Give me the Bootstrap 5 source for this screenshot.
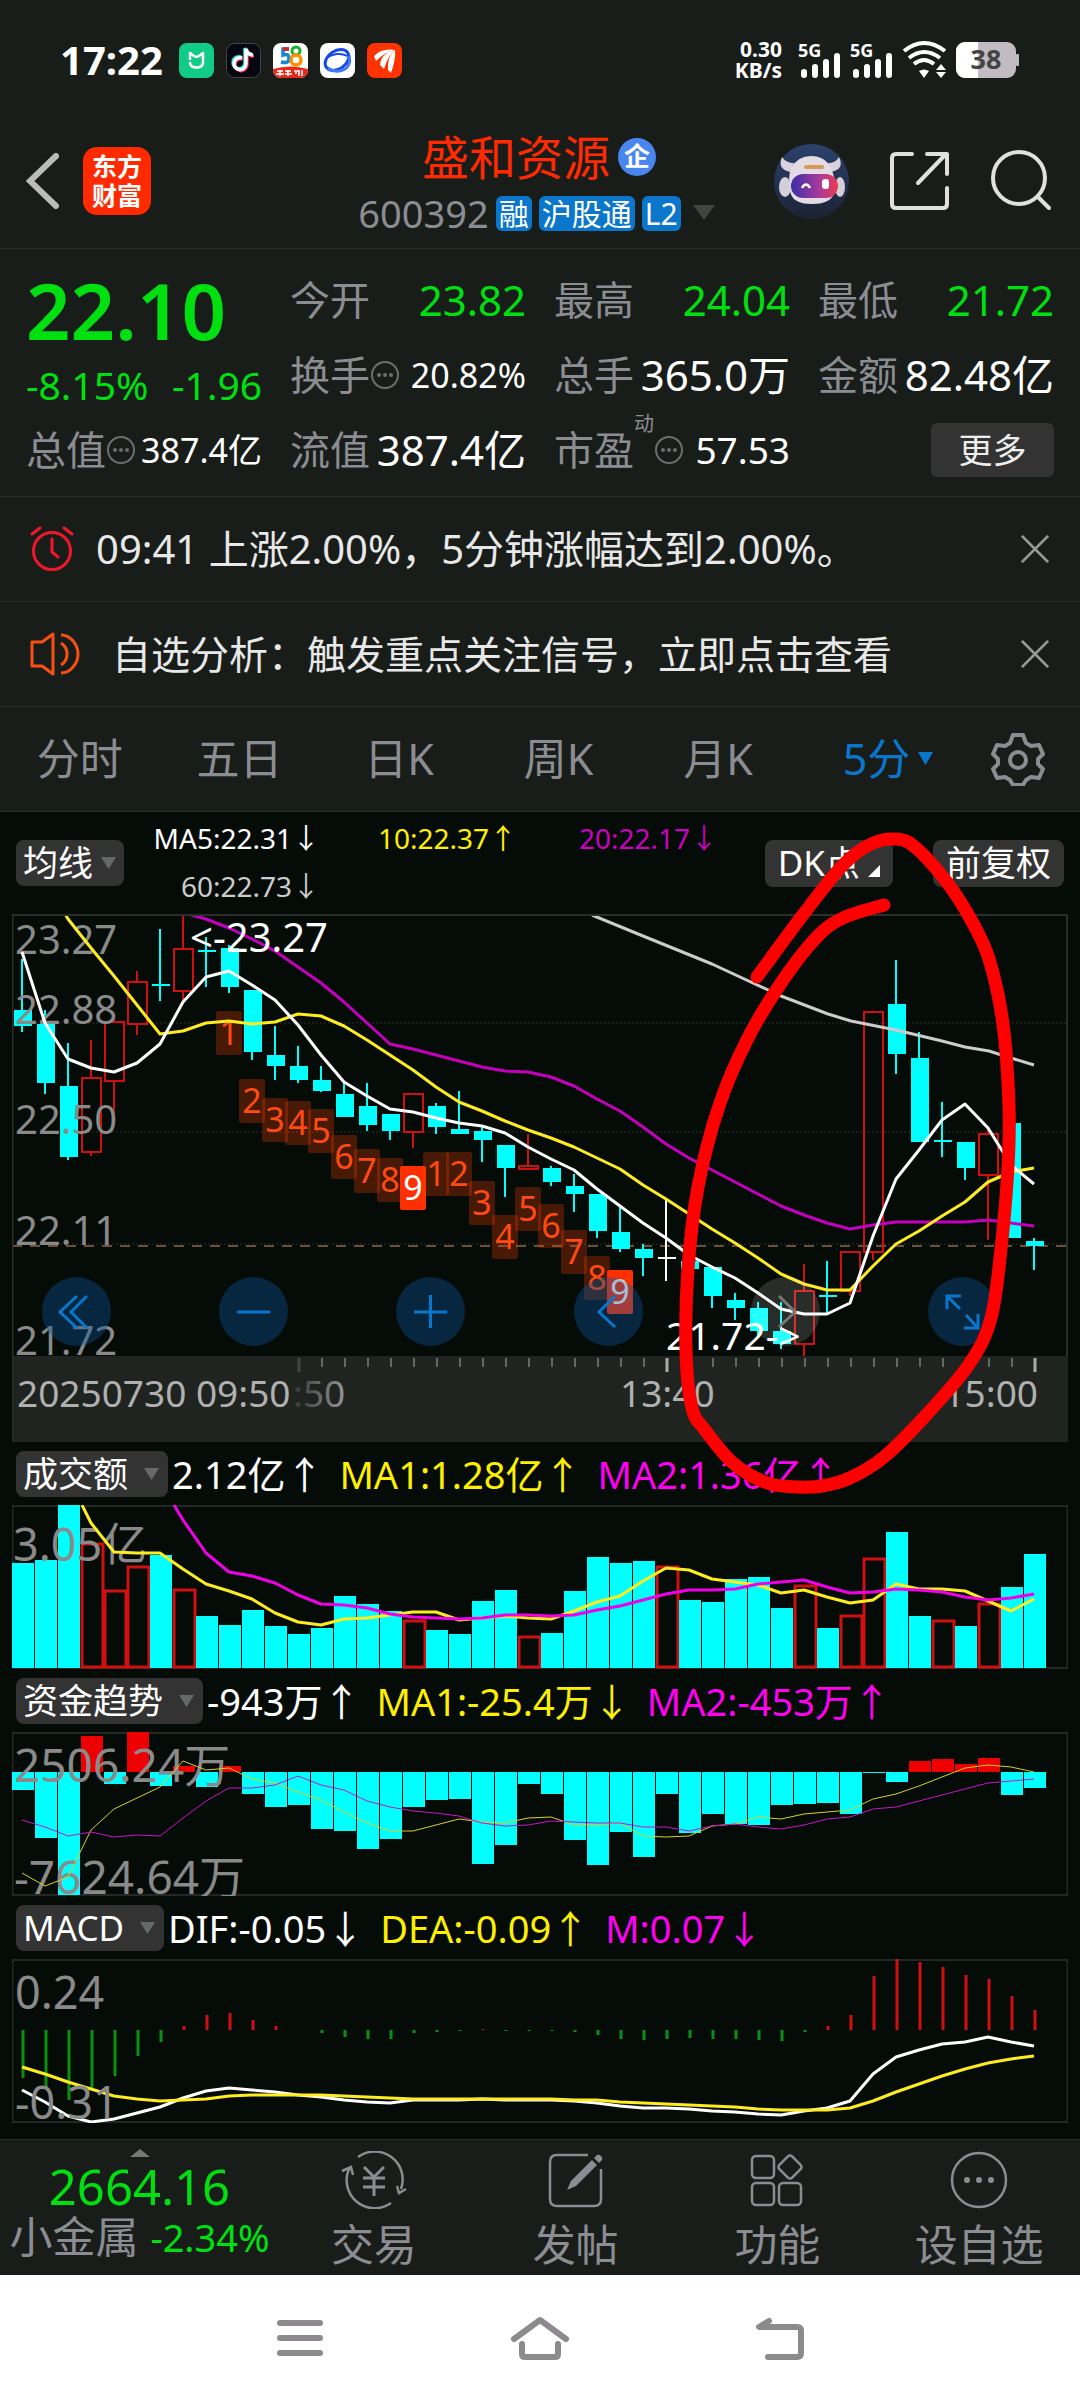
<!DOCTYPE html>
<html lang="zh-CN">
<head>
<meta charset="utf-8">
<meta name="viewport" content="width=device-width, initial-scale=1">
<title>盛和资源 600392</title>
<link href="https://cdn.jsdelivr.net/npm/bootstrap@5.3.0/dist/css/bootstrap.min.css" rel="stylesheet">
<style>
  :root { --up:#e60000; --down:#00ffff; --gain:#00e010; --muted:#8b8d93; --panel:#191d1a; --ink:#050b07; --rule:#2b2f2c; --blue:#0a76cc; }
  body { background:#fff; color:#fff; font-family:"Noto Sans","Noto Sans CJK SC",sans-serif; font-size:38px; line-height:48px; }
  button, select { font-family:inherit; }
  svg { display:block; }
  .plain { background:none; border:0; padding:0; color:inherit; }
  .panel { background:var(--panel); }
  .rule { border-bottom:1px solid var(--rule); }
  .muted { color:var(--muted); }
  .gain { color:var(--gain); }

  .statusbar { height:120px; padding:0 60px; font-weight:700; }
  .statusbar svg { overflow:visible; }
  .clock { font-size:40px; margin-right:16px; }
  .appicon { width:35px; height:35px; }
  .speed { font-size:21px; line-height:21px; text-align:right; }

  .topbar { height:129px; padding:0 28px 6px 26px; }
  .side { flex:1 1 0; }
  .applogo { width:68px; height:68px; border-radius:14px; background:#ff2a00; font-size:25px; line-height:29px; font-weight:700; text-align:center; }
  .stockname { font-size:47px; line-height:56px; color:#ff2a00; }
  .firm { width:38px; height:38px; border-radius:50%; background:#4a86f0; font-size:26px; line-height:36px; text-align:center; font-weight:700; }
  .code { font-size:38px; line-height:40px; }
  .chip { background:#0a76cc; border-radius:6px; font-size:30px; line-height:35px; padding:0 3px; }

  .quote { padding:13px 26px 9px; }
  .figures { display:grid; grid-template-columns:repeat(4,1fr); grid-auto-rows:75px; column-gap:28px; }
  .lastprice { grid-row:span 2; }
  .price { font-size:78px; line-height:96px; font-weight:600; }
  .change { font-size:39px; line-height:54px; }
  .figure { display:flex; align-items:center; white-space:nowrap; }
  .figure dt { font-size:40px; font-weight:400; color:var(--muted); display:flex; align-items:center; }
  .figure dd { margin:0 0 0 auto; font-size:42px; }
  .figure dd.small-num { font-size:34px; }
  .figure dd.mid-num { font-size:37px; }
  .figure sup { font-size:20px; line-height:20px; align-self:flex-start; top:-12px; }
  .hint { width:30px; height:30px; }
  .more { width:123px; height:54px; border-radius:6px; background:#333; color:#eee; font-size:34px; line-height:50px; border:0; margin-left:auto; }

  .notice { height:105px; padding:0 30px; font-size:39px; color:#e8e8e8; white-space:nowrap; }
  .notice .alarm { font-size:40px; }

  .periods { height:105px; padding-right:22px; font-size:43px; }
  .periods a { color:var(--muted); text-decoration:none; text-align:center; flex:1 1 0; }
  .periods a.on { color:var(--blue); flex:0 0 180px; }
  .periods .gear { flex:0 0 80px; }

  .charts { background:var(--ink); padding:0 12px 16px; position:relative; }
  .mabar { height:102px; padding:0 4px; }
  .malist { display:grid; grid-template-columns:196px 197px 201px; font-size:28px; line-height:48px; text-align:right; white-space:nowrap; margin-top:-2px; }
  .pick { appearance:none; -webkit-appearance:none; width:auto; flex:none; height:46px; border:0; border-radius:8px; color:#fff; font-size:35px; line-height:44px; padding:0 39px 0 7px; background:#333 url("data:image/svg+xml,%3Csvg xmlns='http://www.w3.org/2000/svg' viewBox='0 0 15 12'%3E%3Cpath d='M0 0h15L7.5 12z' fill='%23666a66'/%3E%3C/svg%3E") no-repeat right 9px center / 15px 12px; }
  .pick.slim { padding-right:30px; background-position:right 8px center; }
  .tool { height:47px; border:0; border-radius:8px; background:#333; color:#fff; font-size:35px; line-height:44px; white-space:nowrap; padding:0 13px; }
  .paneltop { height:63px; padding:0 4px; font-size:38px; white-space:nowrap; }
  .ind { margin-left:4px; margin-right:12px; }
  .c-y { color:#fff000; } .c-m { color:#ff00f0; } .c-p { color:#cc00c0; } .c-g { color:#ccc; }
  .plot { width:100%; height:auto; overflow:hidden; }
  .plot text { font-family:"Noto Sans","Noto Sans CJK SC",sans-serif; }
  .pads { position:absolute; top:363px; left:30px; right:71px; }
  .pad { width:69px; height:69px; border-radius:50%; border:0; padding:0; background:rgba(8,88,156,.38); }
  .pad.off { background:rgba(255,255,255,.14); }
  .marker { position:absolute; left:0; top:0; width:100%; height:auto; pointer-events:none; }

  .dock { height:136px; border-top:1px solid var(--rule); }
  .dock a { color:var(--muted); text-decoration:none; text-align:center; flex:1 1 0; font-size:43px; line-height:56px; padding-top:11px; }
  .dock a.sector { flex:0 0 273px; padding:9px 0 0 6px; white-space:nowrap; }
  .sector .idx { font-size:49px; line-height:58px; }
  .sector .pct { font-size:38px; }
  .navkeys { height:126px; background:#fff; padding:0 180px; }
  .navkeys button { flex:1 1 0; }
</style>
</head>
<body>

<div class="panel statusbar d-flex align-items-center">
  <span class="clock">17:22</span>
  <div class="d-flex" style="gap:12px">
    <svg class="appicon" viewBox="0 0 35 35"><rect width="35" height="35" rx="8" fill="#10cc88"/><path d="M11 16V10l4 3q2.500 1.500 5 0l4-3v6M11 20c1 6 12 6 13 0v-3" fill="none" stroke="#fff" stroke-width="2.500" stroke-linecap="round" stroke-linejoin="round"/></svg>
    <svg class="appicon" viewBox="0 0 35 35"><rect x=".5" y=".5" width="34" height="34" rx="8" fill="#070712" stroke="#444"/><g fill="none" stroke-width="3.500"><path d="M16 15a6 6 0 1 0 4 6V6c1 4 4 6 7 6" stroke="#22e8e8" transform="translate(-1 -1)"/><path d="M16 15a6 6 0 1 0 4 6V6c1 4 4 6 7 6" stroke="#ff2858" transform="translate(1 1)"/><path d="M16 15a6 6 0 1 0 4 6V6c1 4 4 6 7 6" stroke="#fff"/></g></svg>
    <svg class="appicon" viewBox="0 0 35 35"><rect width="35" height="35" rx="8" fill="#fff"/><path d="M16 6H10v6q6-2 6 3.500T8 19" fill="none" stroke="#1288d8" stroke-width="3.500"/><path d="M16 6h-6" stroke="#e02020" stroke-width="3.500"/><circle cx="23" cy="8" r="4" fill="none" stroke="#18b030" stroke-width="3"/><circle cx="23" cy="17" r="5" fill="none" stroke="#ff9000" stroke-width="3.500"/><path d="M0 26q17-5 35 0v1a8 8 0 0 1-8 8H8a8 8 0 0 1-8-8z" fill="#e82818"/><path d="M4 28h6M3 31h8M7 27v6M12 28h6M12 31h7M15 27v6M21 28h6M26 28v5M22 30h2M29 27v6" stroke="#fff" stroke-width="1.500"/></svg>
    <svg class="appicon" viewBox="0 0 35 35"><rect width="35" height="35" rx="8" fill="#fff"/><g fill="none"><ellipse cx="17" cy="17" rx="13" ry="9" transform="rotate(-35 17 17)" stroke="#1848e8" stroke-width="3"/><path d="M29 13c4 14-12 19-21 12" stroke="#3f7cf5" stroke-width="3"/><path d="M7 15c6-5 15-5 20-2" stroke="#1848e8" stroke-width="2"/></g></svg>
    <svg class="appicon" viewBox="0 0 35 35"><rect width="35" height="35" rx="8" fill="#ff3300"/><g fill="#fff"><path d="M7 13Q15 5 28 7Q18 9 9 18z"/><path d="M13 22Q14 10 28 7Q21 13 17 26z"/><path d="M21 27Q20 14 28 7Q29 16 24 30z"/></g></svg>
  </div>
  <div class="ms-auto d-flex align-items-center">
    <div class="speed">0.30<br>KB/s</div>
    <svg width="44" height="38" viewBox="0 0 44 38" class="ms-3"><text x="0" y="16" font-size="18" font-weight="700" fill="#fff">5G</text><path d="M6 31v3M17 26v8M28 21v13M39 15v19" stroke="#fff" stroke-width="6" stroke-linecap="round"/></svg>
    <svg width="44" height="38" viewBox="0 0 44 38" class="ms-2"><text x="0" y="16" font-size="18" font-weight="700" fill="#fff">5G</text><path d="M6 31v3M17 26v8M28 21v13M39 15v19" stroke="#fff" stroke-width="6" stroke-linecap="round"/></svg>
    <svg width="46" height="38" viewBox="0 0 46 38" class="ms-2"><g fill="none" stroke="#fff" stroke-width="4"><path d="M2 10Q22-6 43 10M7 17Q22 5 38 17M12 23Q22 15 32 23"/></g><path d="M17 30q5-3 10 0l-5 7zM34 29l5-6 5 6zM34 31l5 6 5-6z" fill="#fff"/></svg>
    <svg width="64" height="36" viewBox="0 0 64 36" class="ms-2"><rect width="60" height="36" rx="9" fill="#c2bcc2"/><path d="M9 0h13v36H9a9 9 0 0 1-9-9V9a9 9 0 0 1 9-9z" fill="#fff"/><rect x="60" y="12" width="3" height="12" rx="1" fill="#c2bcc2"/><text x="30" y="27" text-anchor="middle" font-size="27" font-weight="700" fill="#444">38</text></svg>
  </div>
</div>

<header class="panel topbar rule d-flex align-items-center">
  <div class="side d-flex align-items-center">
    <button class="plain" aria-label="返回"><svg width="33" height="56" viewBox="0 0 33 56"><path d="M30 3L4 28l26 25" fill="none" stroke="#bbb" stroke-width="6" stroke-linecap="round"/></svg></button>
    <div class="applogo d-flex flex-column justify-content-center ms-4"><span>东方</span><span>财富</span></div>
  </div>
  <div class="text-center">
    <div class="d-flex align-items-center justify-content-center" style="gap:8px"><h1 class="stockname mb-0 fw-normal">盛和资源</h1><span class="firm">企</span></div>
    <div class="d-flex align-items-center justify-content-center mt-2" style="gap:7px">
      <span class="code muted">600392</span><span class="chip">融</span><span class="chip">沪股通</span><span class="chip">L2</span>
      <svg width="32" height="16" viewBox="0 0 32 16"><path d="M5 0h22L16 15z" fill="#444"/></svg>
    </div>
  </div>
  <div class="side d-flex align-items-center justify-content-end" style="gap:41px">
    <button class="plain" aria-label="助手"><svg width="75" height="75" viewBox="0 0 75 75">
      <defs><linearGradient id="visor"><stop offset="0" stop-color="#3a2fa8"/><stop offset=".6" stop-color="#a83a9c"/><stop offset="1" stop-color="#ee3a50"/></linearGradient><linearGradient id="sky" x2="0" y2="1"><stop offset="0" stop-color="#2c416c"/><stop offset="1" stop-color="#1c2234"/></linearGradient></defs>
      <circle cx="37.500" cy="37.500" r="37.500" fill="url(#sky)"/>
      <path d="M16 28Q3 25 8 13Q12 19 20 19zM57 28Q71 25 65 13Q62 19 54 19z" fill="#d8d2dc"/>
      <path d="M17 24Q24 12 37 12Q51 12 57 24Q61 32 61 46Q59 60 38 60Q17 60 16 46Q14 32 17 24z" fill="#e3dce4"/>
      <ellipse cx="11" cy="43" rx="6" ry="10" fill="#d5cfd8"/><ellipse cx="66" cy="43" rx="5" ry="10" fill="#d5cfd8"/>
      <rect x="17" y="30" width="47" height="24" rx="12" fill="url(#visor)"/>
      <path d="M28 44q4-7 8 0" fill="none" stroke="#fff" stroke-width="2.500"/><rect x="48" y="35" width="7" height="10" rx="3" fill="#fff"/><rect x="30" y="21" width="20" height="4" rx="2" fill="#d89858"/></svg></button>
    <button class="plain" aria-label="分享"><svg width="59" height="60" viewBox="0 0 59 60" fill="none" stroke="#e0e0e0" stroke-width="4" stroke-linecap="round" stroke-linejoin="round"><path d="M22 3H6Q2 3 2 7V53Q2 57 6 57H53Q57 57 57 53V37M37 3H57V23M55 4L28 32"/></svg></button>
    <button class="plain" aria-label="搜索"><svg width="62" height="62" viewBox="0 0 62 62" fill="none" stroke="#e0e0e0" stroke-width="4" stroke-linecap="round"><circle cx="29" cy="28" r="26"/><path d="M48 47L59 58"/></svg></button>
  </div>
</header>

<section class="panel quote rule">
  <dl class="figures mb-0">
    <div class="lastprice gain">
      <dt class="price">22.10</dt>
      <dd class="change mb-0 d-flex justify-content-between"><span>-8.15%</span><span>-1.96</span></dd>
    </div>
    <div class="figure"><dt>今开</dt><dd class="gain">23.82</dd></div>
    <div class="figure"><dt>最高</dt><dd class="gain">24.04</dd></div>
    <div class="figure"><dt>最低</dt><dd class="gain">21.72</dd></div>
    <div class="figure"><dt>换手<svg class="hint" viewBox="0 0 30 30"><use href="#dots"/></svg></dt><dd class="small-num">20.82%</dd></div>
    <div class="figure"><dt>总手</dt><dd>365.0万</dd></div>
    <div class="figure"><dt>金额</dt><dd>82.48亿</dd></div>
    <div class="figure"><dt>总值<svg class="hint" viewBox="0 0 30 30"><use href="#dots"/></svg></dt><dd class="small-num">387.4亿</dd></div>
    <div class="figure"><dt>流值</dt><dd>387.4亿</dd></div>
    <div class="figure"><dt>市盈<sup>动</sup><svg class="hint" viewBox="0 0 30 30"><use href="#dots"/></svg></dt><dd class="mid-num">57.53</dd></div>
    <div class="figure"><button class="more">更多</button></div>
  </dl>
  <svg width="0" height="0" class="position-absolute"><defs><g id="dots"><circle cx="15" cy="15" r="13" fill="none" stroke="#6c6e70" stroke-width="2"/><g fill="#6c6e70"><circle cx="9" cy="15" r="2"/><circle cx="15" cy="15" r="2"/><circle cx="21" cy="15" r="2"/></g></g></defs></svg>
</section>

<section class="panel notice rule d-flex align-items-center">
  <svg width="44" height="46" viewBox="0 0 44 46" fill="none" stroke="#f01828" stroke-width="3" stroke-linecap="round"><circle cx="22" cy="25" r="18.500"/><path d="M22 13v13l6 5M2 8l8-6M42 8l-8-6"/></svg>
  <span class="alarm" style="margin-left:22px">09:41 上涨2.00%，5分钟涨幅达到2.00%。</span>
  <button class="plain ms-auto" aria-label="关闭"><svg width="30" height="32" viewBox="0 0 32 32"><path d="M2 2l28 28M30 2L2 30" stroke="#999" stroke-width="3"/></svg></button>
</section>
<section class="panel notice rule d-flex align-items-center">
  <svg width="50" height="44" viewBox="0 0 50 44" fill="none" stroke="#f85010" stroke-width="3" stroke-linejoin="round"><path d="M2 10h10l11-8v40l-11-8H2zM31 11a13 13 0 0 1 0 22M31 3c9 0 17 9 17 19s-8 19-17 19"/></svg>
  <span style="margin-left:32px">自选分析：触发重点关注信号，立即点击查看</span>
  <button class="plain ms-auto" aria-label="关闭"><svg width="30" height="32" viewBox="0 0 32 32"><path d="M2 2l28 28M30 2L2 30" stroke="#999" stroke-width="3"/></svg></button>
</section>

<nav class="panel periods rule d-flex align-items-center">
  <a href="#">分时</a><a href="#">五日</a><a href="#">日K</a><a href="#">周K</a><a href="#">月K</a>
  <a href="#" class="on d-flex align-items-center justify-content-center">5分<svg width="15" height="14" viewBox="0 0 15 14" class="ms-2"><path d="M0 0h15L7.500 13z" fill="#0a76cc"/></svg></a>
  <a href="#" class="gear d-flex justify-content-center" aria-label="设置"><svg width="54" height="54" viewBox="0 0 54 54" fill="none" stroke="#8b8d93" stroke-width="4" stroke-linejoin="round"><path d="M22 3h10l3 8 5 3 8-1 4 9-5 5 0 5 5 5-4 9-8-1-5 3-3 5H22l-3-5-5-3-8 1-4-9 5-5 0-5-5-5 4-9 8 1 5-3z"/><circle cx="27" cy="28" r="8"/></svg></a>
</nav>

<main class="charts">
  <div class="mabar d-flex align-items-center">
    <select class="pick slim" aria-label="主图指标"><option>均线</option></select>
    <div class="malist"><span>MA5:22.31↓</span><span class="c-y">10:22.37↑</span><span class="c-p">20:22.17↓</span><span class="c-g">60:22.73↓</span></div>
    <button class="tool ms-auto d-flex align-items-center">DK点<svg width="12" height="12" viewBox="0 0 12 12" class="ms-2 mt-3"><path d="M12 0v12H0z" fill="#fff"/></svg></button>
    <button class="tool" style="margin-left:40px">前复权</button>
  </div>

  <div class="position-relative">
    <svg class="plot" id="kline" viewBox="0 0 1056 528" aria-label="5分K线图"></svg>
    <div class="pads d-flex justify-content-between">
      <button class="pad" aria-label="快退"><svg viewBox="0 0 69 69" fill="none" stroke="#0a76cc" stroke-width="3"><path d="M35 19L18 35l17 16M45 19L29 35l16 16"/></svg></button>
      <button class="pad" aria-label="缩小"><svg viewBox="0 0 69 69" stroke="#0a76cc" stroke-width="3"><path d="M18 35h33"/></svg></button>
      <button class="pad" aria-label="放大"><svg viewBox="0 0 69 69" stroke="#0a76cc" stroke-width="3"><path d="M18 35h33M34.500 18v33"/></svg></button>
      <button class="pad" aria-label="左移"><svg viewBox="0 0 69 69" fill="none" stroke="#0a76cc" stroke-width="3"><path d="M41 19L25 35l16 15"/></svg></button>
      <button class="pad off" aria-label="右移"><svg viewBox="0 0 69 69" fill="none" stroke="#777" stroke-width="3"><path d="M28 19L44 35 28 50"/></svg></button>
      <button class="pad" aria-label="全屏"><svg viewBox="0 0 69 69" fill="none" stroke="#0a76cc" stroke-width="3"><path d="M19 32V19h14M20 20l12 12M50 37v14H36M49 50L38 38"/></svg></button>
    </div>
  </div>

  <div class="paneltop d-flex align-items-center"><select class="pick" aria-label="副图一"><option>成交额</option></select><span class="ind">2.12亿↑</span><span class="c-y ind">MA1:1.28亿↑</span><span class="c-m ind">MA2:1.36亿↑</span></div>
  <svg class="plot" id="volume" viewBox="0 0 1056 164" aria-label="成交额"></svg>
  <div class="paneltop d-flex align-items-center"><select class="pick" aria-label="副图二"><option>资金趋势</option></select><span class="ind">-943万↑</span><span class="c-y ind">MA1:-25.4万↓</span><span class="c-m ind">MA2:-453万↑</span></div>
  <svg class="plot" id="funds" viewBox="0 0 1056 164" aria-label="资金趋势"></svg>
  <div class="paneltop d-flex align-items-center"><select class="pick" aria-label="副图三"><option>MACD</option></select><span class="ind">DIF:-0.05↓</span><span class="c-y ind">DEA:-0.09↑</span><span class="c-m ind">M:0.07↓</span></div>
  <svg class="plot" id="macd" viewBox="0 0 1056 164" aria-label="MACD"></svg>

  <svg class="marker" viewBox="0 812 1080 700"><path id="ring" fill="none" stroke="#ff0000" stroke-width="13" stroke-linecap="round" stroke-linejoin="round"/></svg>
</main>

<footer class="panel dock d-flex">
  <a href="#" class="sector d-flex flex-column align-items-center">
    <svg width="20" height="8" viewBox="0 0 20 8"><path d="M10 0l10 8H0z" fill="#777"/></svg>
    <span class="idx gain">2664.16</span>
    <span class="d-flex align-items-center" style="gap:12px;line-height:44px">小金属<span class="pct gain">-2.34%</span></span>
  </a>
  <a href="#" class="d-flex flex-column align-items-center"><svg width="66" height="58" viewBox="0 0 66 58" fill="none" stroke="#8b8d93" stroke-width="2.500"><path d="M17 6A28 28 0 0 1 60 38M50 52A28 28 0 0 1 9 16M1 20l9-4 2 8M65 38l-7 4-2-7"/><path d="M23 16l10 10 10-10M33 26v19M22 27h22M22 36h22" stroke-width="3"/></svg><span class="pt-2">交易</span></a>
  <a href="#" class="d-flex flex-column align-items-center"><svg width="56" height="58" viewBox="0 0 56 58" fill="none" stroke="#8b8d93" stroke-width="2.500"><path d="M40 4H9Q2 4 2 11V48Q2 55 9 55H46Q53 55 53 48V18"/><path d="M19 39l4-9L44 9l5 5-21 21zM46 7l3-3q2-1 4 1t1 4l-3 3z" fill="#8b8d93" stroke="none"/></svg><span class="pt-2">发帖</span></a>
  <a href="#" class="d-flex flex-column align-items-center"><svg width="56" height="58" viewBox="0 0 56 58" fill="none" stroke="#8b8d93" stroke-width="2.500" stroke-linejoin="round"><rect x="3" y="5" width="22" height="22" rx="4"/><rect x="3" y="32" width="22" height="22" rx="4"/><rect x="30" y="32" width="22" height="22" rx="4"/><rect x="32" y="7" width="18" height="18" rx="3" transform="rotate(45 41 16)"/></svg><span class="pt-2">功能</span></a>
  <a href="#" class="d-flex flex-column align-items-center"><svg width="58" height="58" viewBox="0 0 58 58"><circle cx="29" cy="29" r="27" fill="none" stroke="#8b8d93" stroke-width="2.500"/><g fill="#8b8d93"><circle cx="17" cy="29" r="3"/><circle cx="29" cy="29" r="3"/><circle cx="41" cy="29" r="3"/></g></svg><span class="pt-2">设自选</span></a>
</footer>

<nav class="navkeys d-flex align-items-center">
  <button class="plain d-flex justify-content-center" aria-label="最近任务"><svg width="46" height="44" viewBox="0 0 46 44" stroke="#8c8a8c" stroke-width="6" stroke-linecap="round"><path d="M3 7h40M3 22h40M3 37h40"/></svg></button>
  <button class="plain d-flex justify-content-center" aria-label="主屏幕"><svg width="60" height="46" viewBox="0 0 60 46" fill="none" stroke="#8c8a8c" stroke-width="6" stroke-linecap="round" stroke-linejoin="round"><path d="M4 24L30 5l26 19M12 29v10q0 3 3 3h30q3 0 3-3V29"/></svg></button>
  <button class="plain d-flex justify-content-center" aria-label="返回"><svg width="50" height="46" viewBox="0 0 50 46" fill="none" stroke="#8c8a8c" stroke-width="6" stroke-linecap="round" stroke-linejoin="round"><path d="M14 6L4 12h38q4 0 4 4v22q0 4-4 4H13"/></svg></button>
</nav>

<script>
const CYAN = '#00ffff', RED = '#d01010', STEP = 23;
const cx = i => 10 + STEP * i;
const line = (pts, color, w) => `<polyline points="${pts.map(p => p.join()).join(' ')}" fill="none" stroke="${color}" stroke-width="${w}" stroke-linejoin="round"/>`;
const series = (ys, from, color, w, lead) => line((lead ? [lead] : []).concat(ys.map((y, k) => [cx(from + k), y])), color, w);
const label = (x, y, s, size, color = '#8a8a8a', extra = '') => `<text x="${x}" y="${y}" font-size="${size}" fill="${color}" ${extra}>${s}</text>`;
const frame = h => `<rect x="0.5" y="1" width="1055" height="${h}" fill="none" stroke="#242825" stroke-width="2"/>`;

/* K line: [high, body top, body bottom, low, kind] */
const candles = [[45,96,112,118],[96,110,169,180],[129,172,243,246],[126,163,238,242,'r'],[106,107,167,205,'r'],[57,67,110,121,'r'],[15,71,71,87],[1,34,77,86,'r'],[23,37,37,73],[31,34,73,79],[76,76,138,146],[112,141,152,166],[132,152,166,169],[152,166,177,178],[168,180,203,203],[169,192,211,217],[200,200,217,226],[179,179,218,234,'r'],[189,192,213,220],[177,215,220,220],[212,217,226,248],[231,231,254,283],[220,251,255,255,'r'],[252,254,268,272],[260,272,280,298],[280,280,317,324],[291,318,335,338],[330,335,344,362],[285,344,344,367,'w'],[345,347,355,355],[353,353,382,394],[379,386,394,406],[388,394,417,424],[388,417,430,435],[350,376,430,442,'r'],[347,382,382,399],[337,337,377,382,'r'],[97,97,338,346,'r'],[46,90,140,160],[118,144,228,228],[188,227,227,243],[228,228,254,266],[212,219,261,326,'r'],[209,209,324,324],[324,327,332,356]];
let k = '<rect y="442" width="1056" height="86" fill="#202421"/>';
[109, 218, 330].forEach(y => k += `<path d="M0 ${y}H1056" stroke="#2c302d" stroke-dasharray="2 2"/>`);
k += '<path d="M0 332H1056" stroke="#d09870" stroke-dasharray="10 8"/>';
candles.forEach(([h, a, b, l, t], i) => {
  const x = cx(i), c = t === 'r' ? RED : t === 'w' ? '#fff' : CYAN;
  if (t === 'r') k += `<path d="M${x} ${h}V${a}M${x} ${b}V${l}" stroke="${c}" stroke-width="2"/><rect x="${x - 9}" y="${a + 1}" width="19" height="${b - a - 1}" fill="none" stroke="${c}" stroke-width="2"/>`;
  else k += `<path d="M${x} ${h}V${l}" stroke="${c}" stroke-width="2"/><rect x="${x - 8}" y="${a === b ? a - 1 : a}" width="18" height="${Math.max(b - a, 2)}" fill="${c}"/>`;
});
k += label(3, 40, '23.27', 40) + label(3, 110, '22.88', 40) + label(3, 220, '22.50', 40) + label(3, 331, '22.11', 40) + label(3, 441, '21.72', 40);
/* TD count tags: [candle, top, digit] */
[[9,97,1],[10,165,2],[11,184,3],[12,187,4],[13,195,5],[14,221,6],[15,235,7],[16,244,8],[17,252,9],[18,238,1],[19,238,2],[20,267,3],[21,301,4],[22,273,5],[23,290,6],[24,316,7],[25,342,8],[26,356,9]].forEach(([i, y, n]) => {
  k += `<rect x="${cx(i) - 13}" y="${y}" width="26" height="44" rx="2" fill="${n === 9 ? '#ff3000' : '#ff4000'}" fill-opacity="${n === 9 ? 1 : .27}"/>` + label(cx(i), y + 34, n, 34, n === 9 ? '#fff' : '#ff4a10', 'text-anchor="middle"');
});
k += line([[580,1],[631,22],[700,50],[769,82],[816,100],[839,107],[884,116],[930,127],[953,133],[977,137],[999,144],[1022,151]], '#ccc', 3);
k += series([5,14,25,37,53,69,88,109,130,135,141,147,153,157,158,163,172,185,197,213,230,244,256,268,280,292,301,309,315,311,308,308,308,308,306,309,312], 8, '#c400bc', 3, [176,0]);
k += series([5,34,62,91,120,117,109,107,110,108,100,102,112,126,141,156,173,188,197,207,216,224,233,244,255,271,285,300,315,329,344,360,370,376,376,352,330,317,302,288,268,258,254], 2, '#ffec20', 3, [53,0]);
k += series([38,109,145,154,158,149,130,88,63,57,71,86,111,141,168,182,195,198,204,209,212,219,233,245,256,275,292,309,324,341,353,364,379,395,400,400,389,322,265,236,206,190,214,251,270], 0, '#fff', 3);
k += label(178, 38, '&lt;-23.27', 40, '#fff') + label(654, 436, '21.72-&gt;', 39, '#fff');
for (let i = 12; i < 45; i++) { const big = i === 12 || i === 28 || i === 44; k += `<path d="M${cx(i) + 1} 444v${big ? 14 : 9}" stroke="${i === 12 ? '#444' : '#aaa'}" stroke-width="${big ? 3 : 1}"/>`; }
k += '<defs><linearGradient id="fade" gradientUnits="userSpaceOnUse" x1="280" x2="335" y1="0" y2="0"><stop offset="0" stop-color="#333"/><stop offset="1" stop-color="#999"/></linearGradient></defs>';
k += label(5, 493, '20250730 09:50', 37, '#b0b0b0') + label(281, 493, ':50', 37, 'url(#fade)') + label(608, 493, '13:40', 37, '#b0b0b0') + label(1026, 493, '15:00', 37, '#b0b0b0', 'text-anchor="end"');
k += '<path d="M0.500 528V1H1055V442" fill="none" stroke="#2a2e2b" stroke-width="2"/>';
document.getElementById('kline').innerHTML = k;

/* turnover */
const reds = [3,4,5,7,17,22,28,34,36,37,40,42];
const vol = [58,55,0,38,85,61,50,84,111,120,105,121,129,123,91,99,106,115,125,129,96,85,131,128,86,52,58,56,61,95,97,74,72,103,80,123,110,53,27,111,115,121,98,82,49];
document.getElementById('volume').innerHTML = frame(162) + vol.map((y, i) => reds.includes(i)
  ? `<rect x="${STEP * i + 1}" y="${y + 1}" width="21" height="${161 - y}" fill="none" stroke="${RED}" stroke-width="3"/>`
  : `<rect x="${STEP * i}" y="${y}" width="22" height="${163 - y}" fill="${CYAN}"/>`).join('')
  + label(1, 56, '3.05亿', 45)
  + series([18,47,48,48,64,79,86,94,108,117,120,114,113,110,107,107,115,113,111,113,114,106,97,91,76,63,65,74,77,80,88,85,92,98,95,79,84,84,86,96,106,94], 3, '#ffec20', 3, [70,0])
  + series([15,48,67,71,78,90,99,100,103,109,112,113,114,113,110,110,111,110,105,101,95,89,85,85,84,79,77,75,82,88,87,84,85,87,92,95,93,89], 7, '#f000e8', 3, [162,0]);

/* capital flow, zero line at 40 */
const flow = [58,106,163,4,52,0,54,34,55,34,62,75,73,97,99,117,107,75,68,67,132,113,52,62,108,133,100,125,62,101,82,92,93,73,72,71,82,41,50,29,27,32,26,63,56];
document.getElementById('funds').innerHTML = frame(162) + flow.map((y, i) => `<rect x="${STEP * i}" y="${Math.min(y, 40)}" width="22" height="${Math.abs(y - 40)}" fill="${y < 40 ? '#ee0000' : CYAN}"/>`).join('')
  + label(2, 50, '2506.24万', 46) + label(2, 162, '-7624.64万', 46)
  + series([141,154,145,98,77,66,55,29,38,36,47,51,60,68,80,91,99,99,93,87,90,91,86,85,93,93,91,104,105,104,94,92,85,87,82,80,78,67,62,54,45,36,33,35,40], 0, '#d8d020', 1)
  + series([88,95,104,100,105,103,104,86,69,56,56,53,44,53,58,69,75,79,81,84,91,94,93,89,90,91,91,95,95,99,94,92,95,97,93,87,85,77,75,69,63,57,51,49,47], 0, '#c814c8', 1);

/* MACD, zero line at 71 */
const hist = [119,128,141,130,117,97,83,67,56,54,61,67,71,74,78,80,80,74,73,72,70,72,72,72,73,76,80,81,80,79,80,80,81,82,73,67,56,17,0,3,8,16,20,37,51];
document.getElementById('macd').innerHTML = frame(162)
  + hist.map((y, i) => `<path d="M${cx(i) + 1} 71V${y}" stroke="${y < 71 ? RED : '#0a9010'}" stroke-width="3"/>`).join('')
  + series([131,143,157,163,160,154,148,139,132,129,131,133,136,138,141,143,144,141,141,141,140,141,141,141,142,144,147,149,149,150,152,153,155,156,152,149,142,115,98,91,85,83,78,83,87], 0, '#fff', 3)
  + series([108,115,123,130,137,140,142,141,140,137,136,136,136,136,137,138,139,140,140,140,140,140,140,140,141,141,143,144,145,146,147,148,150,151,151,151,149,142,133,125,117,110,104,100,97], 0, '#ffec20', 3)
  + label(3, 50, '0.24', 45) + label(3, 160, '-0.31', 45);

/* hand-drawn ring, smoothed through its points */
const p = [[757,977],[802,916],[843,865],[871,844],[896,839],[915,847],[946,881],[970,918],[989,959],[1003,1024],[1009,1106],[1008,1167],[1001,1249],[991,1318],[970,1363],[929,1412],[884,1457],[850,1478],[822,1486],[798,1487],[767,1483],[733,1463],[705,1430],[692,1408],[686,1351],[688,1269],[698,1187],[719,1106],[747,1040],[781,983],[816,938],[843,918],[884,905]];
let d = 'M' + p[0];
for (let i = 0; i < p.length - 1; i++) {
  const a = p[i - 1] || p[i], b = p[i], c = p[i + 1], e = p[i + 2] || c;
  d += `C${b[0] + (c[0] - a[0]) / 6},${b[1] + (c[1] - a[1]) / 6} ${c[0] - (e[0] - b[0]) / 6},${c[1] - (e[1] - b[1]) / 6} ${c}`;
}
document.getElementById('ring').setAttribute('d', d);
</script>
<script src="https://cdn.jsdelivr.net/npm/bootstrap@5.3.0/dist/js/bootstrap.bundle.min.js"></script>
</body>
</html>
